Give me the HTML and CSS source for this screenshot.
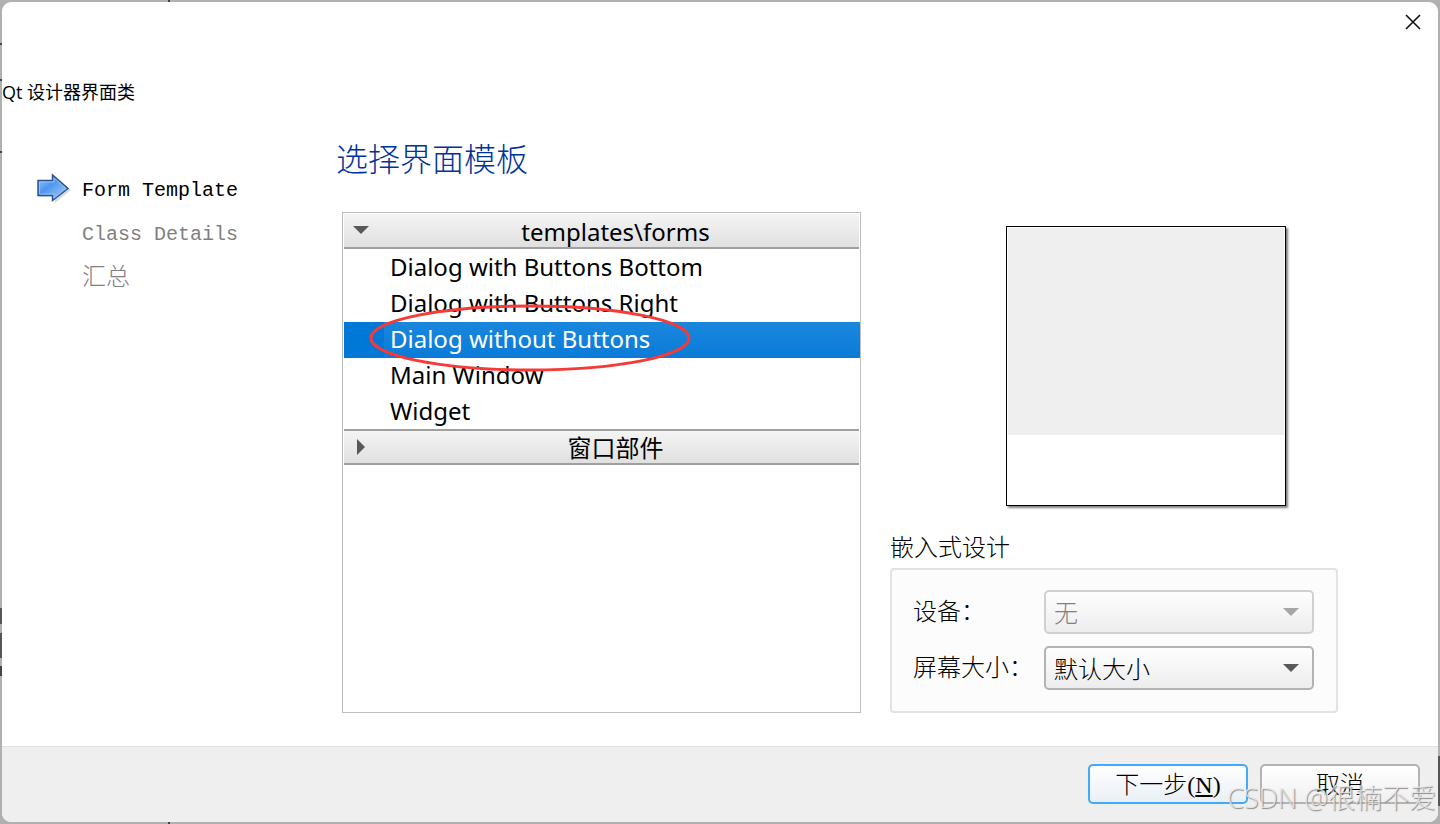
FILE: index.html
```html
<!DOCTYPE html>
<html lang="zh-CN">
<head>
    <meta charset="UTF-8">
    <meta name="viewport" content="width=device-width, initial-scale=1.0">
    <title>Qt 设计器界面类</title>
    <link rel="stylesheet" href="styles.css">
</head>
<body>
    <div class="dialog">
        <header class="titlebar">
            <button type="button" class="close" aria-label="关闭">
                <svg width="16" height="16" viewBox="0 0 16 16"><path d="M1 1L15 15M15 1L1 15" stroke="#111" stroke-width="1.6" fill="none"/></svg>
            </button>
        </header>
        <div class="page-title">Qt 设计器界面类</div>
        <main class="main">
            <ol class="steps">
                <li class="current">
                    <svg class="arrow" width="34" height="30" viewBox="0 0 34 30">
                        <defs>
                            <linearGradient id="blue" x1="0" y1="0" x2="1" y2="1">
                                <stop offset="0" stop-color="#a5cdfa"/>
                                <stop offset="0.4" stop-color="#4d96ee"/>
                                <stop offset="1" stop-color="#b3d4fa"/>
                            </linearGradient>
                        </defs>
                        <path d="M2 9H17V4L34 17L18 30V24H2Z" fill="#000" opacity="0.14"/>
                        <path d="M1 7.500H15.500V2L31 15.500L15.500 27.500V22.500H1Z" fill="url(#blue)" stroke="#2a5590" stroke-width="1.500"/>
                        <path d="M2.500 9H17V5L29 15.500L17 25V21H2.500Z" fill="none" stroke="#8fbdf5" stroke-width="1"/>
                    </svg>
                    Form Template
                </li>
                <li>Class Details</li>
                <li>汇总</li>
            </ol>
            <section class="content">
                <h1>选择界面模板</h1>
                <div class="panes">
                    <div class="tree">
                        <details open>
                            <summary><svg class="mark" width="16" height="16" viewBox="0 0 16 16"><path d="M0 4H16L8 12Z"/></svg>templates\forms</summary>
                            <ul>
                                <li><button type="button">Dialog with Buttons Bottom</button></li>
                                <li><button type="button">Dialog with Buttons Right</button></li>
                                <li class="selected">
                                    <button type="button">Dialog without Buttons</button>
                                    <svg class="ring" width="322" height="68" viewBox="0 0 322 68"><ellipse cx="161" cy="34" rx="159" ry="32" fill="none" stroke="#f63a37" stroke-width="3"/></svg>
                                </li>
                                <li><button type="button">Main Window</button></li>
                                <li><button type="button">Widget</button></li>
                            </ul>
                        </details>
                        <details>
                            <summary><svg class="mark" width="16" height="16" viewBox="0 0 16 16"><path d="M4 0V16L12 8Z"/></svg>窗口部件</summary>
                        </details>
                    </div>
                    <div class="side">
                        <div class="preview"><div class="preview-form"></div></div>
                        <h2>嵌入式设计</h2>
                        <div class="group">
                            <label for="device">设备：</label>
                            <div class="combo">
                                <select id="device" disabled><option>无</option></select>
                                <svg class="mark" width="16" height="8" viewBox="0 0 16 8"><path d="M0 0H16L8 8Z"/></svg>
                            </div>
                            <label for="screen">屏幕大小：</label>
                            <div class="combo">
                                <select id="screen"><option>默认大小</option></select>
                                <svg class="mark" width="16" height="8" viewBox="0 0 16 8"><path d="M0 0H16L8 8Z"/></svg>
                            </div>
                        </div>
                    </div>
                </div>
            </section>
        </main>
        <footer class="footer">
            <button type="button" class="btn primary">下一步(<u>N</u>)</button>
            <button type="button" class="btn">取消</button>
        </footer>
    </div>
    <div class="watermark">CSDN @很楠不爱</div>
</body>
</html>
```
FILE: styles.css
```css
* {
    box-sizing: border-box;
}
body {
    margin: 0;
    min-height: 100vh;
    display: flex;
    padding: 2px;
    position: relative;
    background:
        linear-gradient(#555, #555) 0 608px / 2px 16px no-repeat,
        linear-gradient(#555, #555) 0 633px / 2px 25px no-repeat,
        linear-gradient(#444, #444) 0 666px / 2px 10px no-repeat,
        linear-gradient(#444, #444) 0 43px / 2px 2px no-repeat,
        linear-gradient(#444, #444) 0 79px / 2px 2px no-repeat,
        linear-gradient(#444, #444) 0 151px / 2px 2px no-repeat,
        linear-gradient(#444, #444) 168px 0 / 2px 2px no-repeat,
        linear-gradient(#444, #444) 168px 100% / 2px 2px no-repeat,
        linear-gradient(#555, #555) 100% 756px / 2px 50px no-repeat,
        #b0b0b0;
    font-family: "Liberation Mono", "Noto Sans CJK SC", monospace;
    font-size: 20px;
    color: #000;
}
.dialog {
    flex: 1;
    display: flex;
    flex-direction: column;
    background: #fff;
    border-radius: 9px;
    overflow: hidden;
}
.titlebar {
    height: 78px;
    display: flex;
    justify-content: flex-end;
    align-items: flex-start;
}
.close {
    width: 50px;
    height: 40px;
    padding: 0;
    border: 0;
    background: none;
    line-height: 0;
}
.page-title {
    font: 18px/24px "Open Sans", "Noto Sans CJK SC", sans-serif;
}
.main {
    flex: 1;
    display: flex;
    padding: 32px 100px 33px 34px;
}
.steps {
    list-style: none;
    width: 300px;
    margin: 0;
    padding: 33px 0 0 46px;
    line-height: 44px;
    color: #808080;
    font-weight: 300;
}
.steps .current {
    color: #000;
    position: relative;
}
.arrow {
    position: absolute;
    left: -45px;
    top: 4px;
}
.steps li:last-child {
    font-size: 24px;
}
.content {
    flex: 1;
    display: flex;
    flex-direction: column;
}
h1 {
    margin: 0 0 22px;
    font-size: 32px;
    line-height: 54px;
    font-weight: 300;
    color: #003399;
}
.panes {
    flex: 1;
    display: grid;
    grid-template-columns: 1fr 448px;
    column-gap: 29px;
    padding-left: 6px;
}
.tree {
    border: 1px solid #bdbdbd;
    padding: 1px 0 1px 1px;
    font: 24px/36px "Noto Sans", "Noto Sans CJK SC", sans-serif;
}
.tree summary {
    display: flex;
    justify-content: center;
    height: 35px;
    margin: 0 1px 1px 0;
    padding-left: 28px;
    position: relative;
    list-style: none;
    background: linear-gradient(#f4f4f4, #e0e0e0);
    border-bottom: 2px solid #a0a0a0;
}
.tree details + details summary {
    height: 36px;
    margin-top: -1px;
    border-top: 2px solid #a0a0a0;
    line-height: 34px;
}
.mark {
    fill: #595959;
}
summary .mark {
    position: absolute;
    left: 9px;
    top: 8px;
}
.tree ul {
    list-style: none;
    margin: 0;
    padding: 0;
}
.tree li {
    position: relative;
}
.tree li button {
    display: block;
    width: 100%;
    height: 36px;
    padding: 0 0 2px 46px;
    border: 0;
    background: none;
    font: inherit;
    line-height: 34px;
    color: #000;
    text-align: left;
}
.tree .selected {
    background: linear-gradient(90deg, #0078d7 40px, transparent 40px), linear-gradient(#1a87dd, #0a7bd9);
    z-index: 1;
}
.tree .selected button {
    color: #fff;
}
.ring {
    position: absolute;
    left: 25px;
    top: -18px;
    pointer-events: none;
}
.side {
    display: flex;
    flex-direction: column;
    padding-top: 14px;
}
.preview {
    width: 280px;
    height: 280px;
    margin-right: 52px;
    align-self: flex-end;
    border: 1px solid #000;
    padding: 1px;
    box-shadow: 2px 2px 2px #808080;
}
.preview-form {
    height: 207px;
    background: #efefef;
}
h2 {
    margin: 26px 0 0;
    font-size: 24px;
    line-height: 36px;
    font-weight: 300;
}
.group {
    display: grid;
    grid-template-columns: 131px 1fr;
    row-gap: 12px;
    align-content: center;
    flex: 1;
    padding: 0 22px 2px 21px;
    border: 2px solid #e3e3e3;
    border-radius: 4px;
    background: #fcfcfc;
    font-size: 24px;
    font-weight: 300;
    line-height: 44px;
}
.group label {
    height: 44px;
    line-height: 48px;
}
.combo {
    position: relative;
}
select {
    appearance: none;
    display: block;
    width: 100%;
    height: 44px;
    padding: 2px 8px 0;
    border: 2px solid #b3b3b3;
    border-radius: 5px;
    background: linear-gradient(#fefefe, #ededed);
    font: inherit;
    color: #000;
}
select:disabled {
    border-color: #d0d0d0;
    color: #808080;
    opacity: 1;
}
.combo .mark {
    position: absolute;
    right: 15px;
    top: 18px;
    pointer-events: none;
}
select:disabled + .mark {
    fill: #a6a6a6;
}
.footer {
    display: flex;
    justify-content: flex-end;
    gap: 12px;
    padding: 17px 18px 18px;
    border-top: 1px solid #dfdfdf;
    background: #efefef;
}
.btn {
    width: 160px;
    height: 40px;
    padding: 2px 0 0;
    border: 2px solid #b3b3b3;
    border-radius: 5px;
    background: linear-gradient(#fff, #f0f0f0);
    font: 300 24px/34px "Liberation Serif", "Noto Sans CJK SC", serif;
    color: #000;
}
.btn.primary {
    border-color: #42a9fb;
    background: linear-gradient(#fff, #e9eff5);
}
.watermark {
    position: absolute;
    right: 4px;
    bottom: 8px;
    font: 300 27px/36px "Open Sans", "Noto Sans CJK SC", sans-serif;
    color: rgba(235, 235, 235, 0.8);
    text-shadow: 1px 1px 1px #888;
    pointer-events: none;
}
```
